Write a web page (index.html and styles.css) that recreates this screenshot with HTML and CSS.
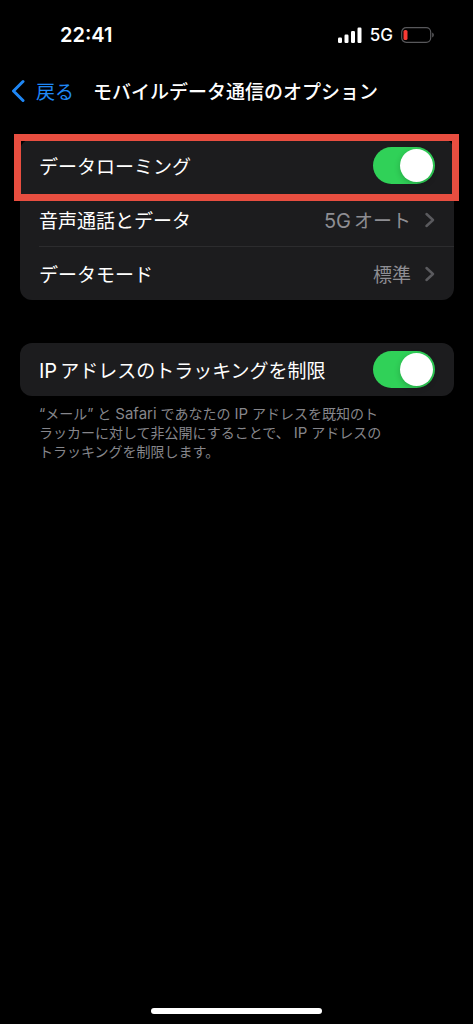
FILE: index.html
```
<!DOCTYPE html>
<html lang="ja">
  <head>
    <meta charset="utf-8">
    <meta name="viewport" content="width=device-width, initial-scale=1">
    <title>モバイルデータ通信のオプション</title>
    <link rel="stylesheet" href="styles.css">
  </head>
  <body>
    <div class="status-bar">
      <div class="time">22:41</div>
      <div class="status-icons">
        <svg width="24" height="16" viewBox="0 0 24 16" fill="#fff">
          <rect x="0" y="10.5" width="4" height="5.5" rx="1.2"/>
          <rect x="6.5" y="7.5" width="4" height="8.5" rx="1.2"/>
          <rect x="13" y="4" width="4" height="12" rx="1.2"/>
          <rect x="19.5" y="0.5" width="4" height="15.5" rx="1.2"/>
        </svg>
        <span class="network">5G</span>
        <svg width="33" height="16" viewBox="0 0 33 16">
          <rect x="0.7" y="0.7" width="29" height="14.6" rx="4.5" fill="none" stroke="#58585b" stroke-width="1.2"/>
          <rect x="2.5" y="3" width="4" height="10" rx="1.6" fill="#f93a34"/>
          <path d="M31.2 5.6c1 .4 1.6 1.3 1.6 2.4s-.6 2-1.6 2.4z" fill="#58585b"/>
        </svg>
      </div>
    </div>

    <header class="nav-bar">
      <a class="back" href="#">
        <svg width="14" height="24" viewBox="0 0 14 24" fill="none" stroke="#1f87f5" stroke-width="3" stroke-linecap="round" stroke-linejoin="round">
          <path d="M12 2.5L2.5 12L12 21.5"/>
        </svg>
        戻る
      </a>
      <h1>モバイルデータ通信のオプション</h1>
    </header>

    <main class="settings">
      <!-- Mobile data options -->
      <div class="card">
        <div class="row highlighted">
          <label for="roaming">データローミング</label>
          <input type="checkbox" class="switch" id="roaming" checked>
        </div>
        <a class="row" href="#">
          <span>音声通話とデータ</span>
          <span class="value"><span class="latin">5G</span>オート</span>
          <svg class="chevron" width="10" height="16" viewBox="0 0 10 16"><path d="M1.5 2L8 8L1.5 14"/></svg>
        </a>
        <a class="row" href="#">
          <span>データモード</span>
          <span class="value">標準</span>
          <svg class="chevron" width="10" height="16" viewBox="0 0 10 16"><path d="M1.5 2L8 8L1.5 14"/></svg>
        </a>
      </div>

      <!-- IP tracking -->
      <div class="card">
        <div class="row">
          <label for="tracking"><span class="latin">IP</span>アドレスのトラッキングを制限</label>
          <input type="checkbox" class="switch" id="tracking" checked>
        </div>
      </div>
      <p class="note">“メール” と<span class="word">Safari</span>であなたの<span class="word">IP</span>アドレスを既知のト<br>ラッカーに対して非公開にすることで、<span class="word">IP</span>アドレスの<br>トラッキングを制限します。</p>
    </main>

    <div class="home-indicator"></div>
  </body>
</html>
```

FILE: styles.css
```
* {
  box-sizing: border-box;
}

body {
  display: flex;
  flex-direction: column;
  min-height: 100vh;
  margin: 0;
  background-color: #000;
  color: #fff;
  font-family: Inter, "Noto Sans CJK JP", sans-serif;
  font-size: 19px;
}

a {
  color: inherit;
  text-decoration: none;
}

svg {
  flex: none;
}

.status-bar {
  display: flex;
  justify-content: space-between;
  align-items: center;
  height: 70px;
  padding: 0 39px 0 60px;
}

.time {
  font-size: 20px;
  font-weight: 600;
}

.status-icons {
  display: flex;
  align-items: center;
  gap: 8px;
}

.network {
  font-size: 17px;
  font-weight: 500;
}

.nav-bar {
  display: flex;
  align-items: center;
  gap: 19px;
  height: 41px;
  padding: 0 11px;
}

.back {
  display: flex;
  align-items: center;
  gap: 11px;
  color: #1f87f5;
}

h1 {
  margin: 0;
  font-size: 19px;
  font-weight: 500;
}

.settings {
  padding: 28px 19px 28px 20px;
}

.card {
  border-radius: 12px;
  background-color: #1c1c1e;
}

.card + .card {
  margin-top: 43px;
}

.row {
  position: relative;
  display: flex;
  align-items: center;
  height: 53px;
  padding: 0 19px;
}

/* Separator starts at the text, not at the card edge */
.row + .row {
  margin-top: 1px;
}

.row + .row::before {
  content: "";
  position: absolute;
  top: -1px;
  left: 19px;
  right: 0;
  height: 1px;
  background-color: #2c2c2e;
}

.highlighted + .row::before {
  display: none;
}

.highlighted::after {
  content: "";
  position: absolute;
  z-index: 1;
  top: -5px;
  right: -5px;
  bottom: -9px;
  left: -6px;
  border: 7px solid #e84e40;
  pointer-events: none;
}

.latin {
  margin-right: 3px;
  font-size: 20px;
}

.value {
  margin-left: auto;
  color: #8e8e93;
}

.chevron {
  margin-left: 14px;
  fill: none;
  stroke: #5a5a5e;
  stroke-width: 2.4;
  stroke-linecap: round;
  stroke-linejoin: round;
}

.switch {
  appearance: none;
  display: flex;
  width: 62px;
  height: 37px;
  margin: 0 0 0 auto;
  padding: 2px;
  border-radius: 19px;
  background-color: #39393d;
}

.switch::before {
  content: "";
  width: 33px;
  height: 33px;
  border-radius: 50%;
  background-color: #fff;
  box-shadow: 0 2px 6px rgba(0, 0, 0, 0.2);
}

.switch:checked {
  justify-content: flex-end;
  background-color: #30d158;
}

.note {
  margin: 8px 19px;
  color: #86868b;
  font-size: 14px;
  line-height: 19px;
}

.word {
  margin: 0 4px;
  font-size: 15px;
}

.home-indicator {
  width: 36%;
  height: 6px;
  margin: auto auto 10px;
  border-radius: 3px;
  background-color: #fff;
}
```
